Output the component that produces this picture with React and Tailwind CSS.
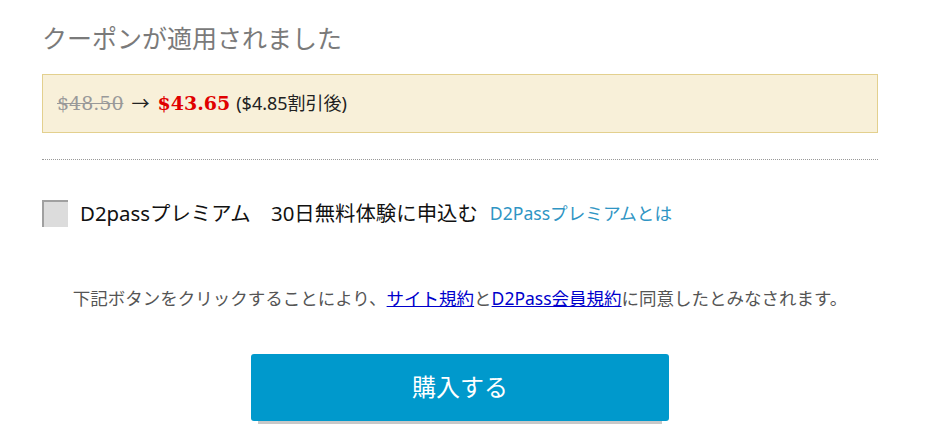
const jp = { fontFamily: '"Noto Sans", "Noto Sans CJK JP", sans-serif' };
const serif = { fontFamily: '"DejaVu Serif", "Liberation Serif", serif' };

const CouponResult = () => {
  return (
    <div className="min-h-screen bg-white" style={jp}>
      <div className="ml-[42px] w-[836px] pt-[22px]">
        <h2 className="text-[25px] leading-[32px] font-normal text-[#7a7a7a]">
          クーポンが適用されました
        </h2>

        <div className="mt-[20px] flex h-[59px] items-center border border-[#e3d08e] bg-[#f8f0d9] px-[14px] text-[18px] text-[#222]">
          <span className="text-[19px] text-[#999] line-through" style={serif}>
            $48.50
          </span>
          <span className="mx-[8px]">→</span>
          <span className="text-[19px] font-bold text-[#e00000]" style={serif}>
            $43.65
          </span>
          <span className="ml-[6px]">($4.85割引後)</span>
        </div>

        <div className="mt-[26px] border-t border-dotted border-[#999]" />

        <div className="mt-[38px] flex items-center">
          <span className="h-[27px] w-[26px] border-l-2 border-t-2 border-[#a0a0a0] bg-[#dcdcdc]" />
          <span className="ml-[12px] text-[20.4px] text-[#111]">
            D2passプレミアム　30日無料体験に申込む
          </span>
          <a href="#" className="ml-[12px] text-[17.6px] text-[#2f95c4]">
            D2Passプレミアムとは
          </a>
        </div>

        <p className="mt-[56px] text-center text-[17.5px] text-[#555]">
          下記ボタンをクリックすることにより、
          <a href="#" className="text-[#0000cc] underline">サイト規約</a>
          と
          <a href="#" className="text-[#0000cc] underline">D2Pass会員規約</a>
          に同意したとみなされます。
        </p>

        <div className="mt-[43px] flex justify-center">
          <button className="h-[67px] w-[418px] rounded-[3px] bg-[#0099cc] text-[24px] text-white shadow-[0_10px_0_-7px_#c8c8c8]">
            購入する
          </button>
        </div>
      </div>
    </div>
  );
};

export default function App() {
  return <CouponResult />;
}
